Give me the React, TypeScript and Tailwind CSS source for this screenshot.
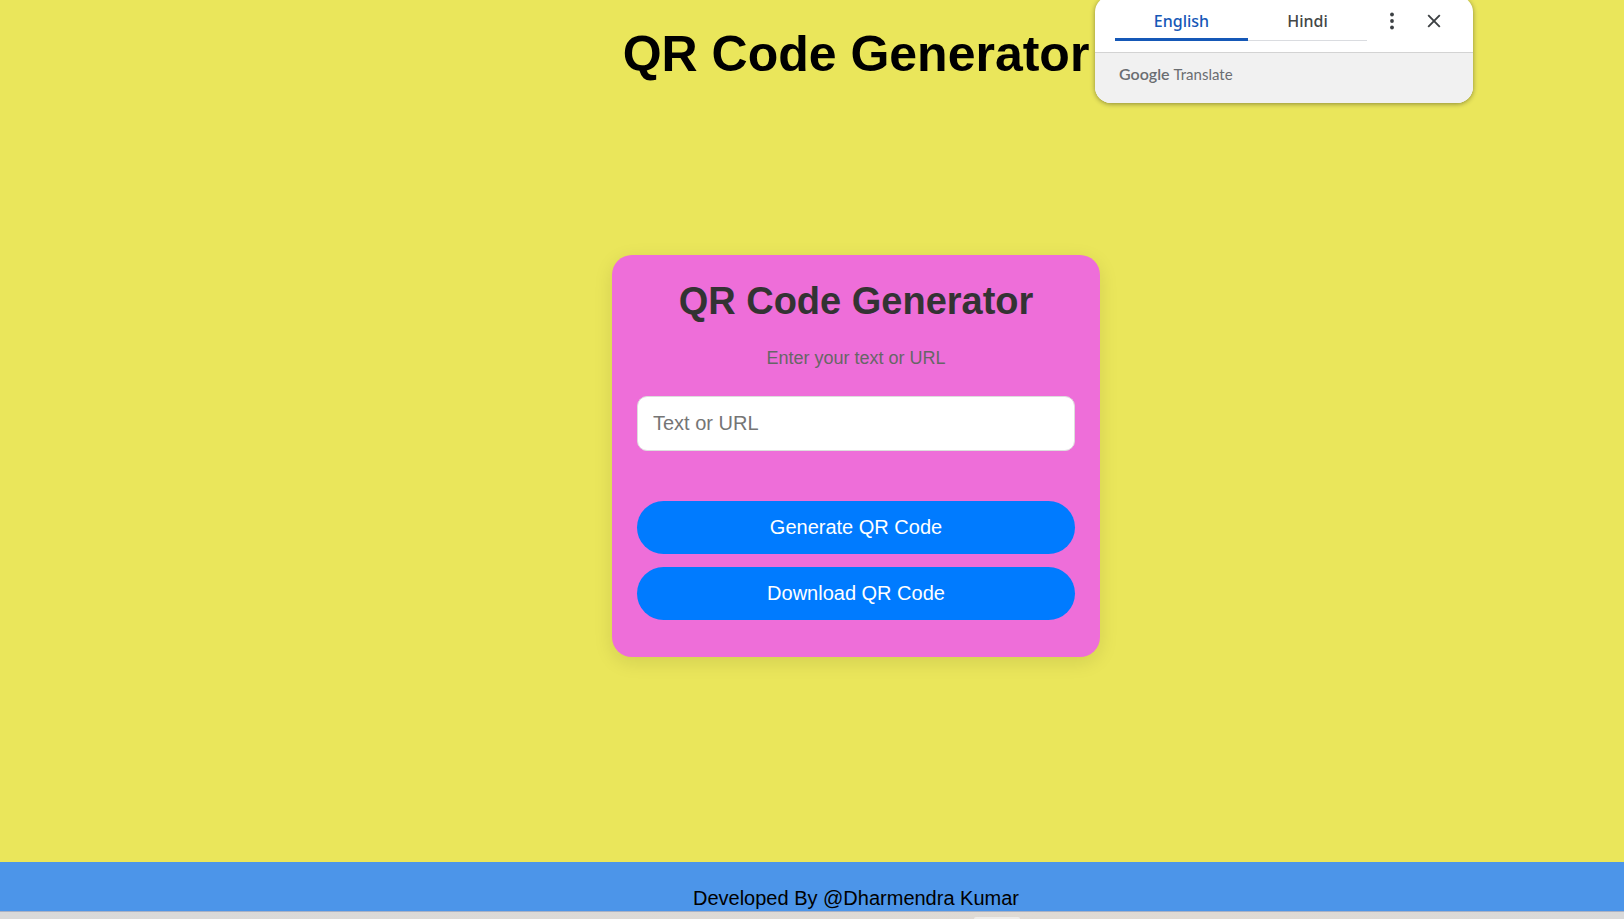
import { useState } from "react";

function TranslatePopup() {
  const [language, setLanguage] = useState("English");
  const tab = "flex-1 cursor-pointer pb-2 text-base leading-6 font-medium";
  const active = "border-b-3 border-[#1558b7] text-[#1558b7]";
  const idle = "border-b border-[#dadce0] text-[#444746]";
  return (
    <aside
      aria-label="Google Translate"
      className="absolute -top-1 right-[151px] w-[378px] overflow-hidden rounded-2xl bg-white font-['Noto_Sans',sans-serif] shadow-[0_1px_5px_rgba(0,0,0,0.4)]"
    >
      <div className="flex h-[57px] items-start border-b border-[#d3d3d3] pt-[13px] pl-5">
        <div className="flex h-8 w-[252px]">
          <button
            type="button"
            onClick={() => setLanguage("English")}
            className={`${tab} basis-[133px] grow-0! ${language === "English" ? active : idle}`}
          >
            English
          </button>
          <button
            type="button"
            onClick={() => setLanguage("Hindi")}
            className={`${tab} ${language === "Hindi" ? active : idle}`}
          >
            Hindi
          </button>
        </div>
        <button type="button" aria-label="Options" className="ml-[13px] flex h-6 w-6 items-center justify-center">
          <svg viewBox="0 0 20 20" className="h-5 w-5 fill-[#3c4043]" aria-hidden="true">
            <circle cx="10" cy="3.5" r="1.9" />
            <circle cx="10" cy="10" r="1.9" />
            <circle cx="10" cy="16.5" r="1.9" />
          </svg>
        </button>
        <button type="button" aria-label="Close" className="ml-[18px] flex h-6 w-6 items-center justify-center">
          <svg viewBox="0 0 20 20" className="h-5 w-5 stroke-[#3c4043]" aria-hidden="true">
            <path d="M4.2 4.2 15.8 15.8M15.8 4.2 4.2 15.8" strokeWidth="1.9" fill="none" />
          </svg>
        </button>
      </div>
      <div className="flex h-[50px] items-baseline gap-1 bg-[#f1f1f1] pt-[11px] pl-6 font-['Lato',sans-serif] leading-5 text-[#6a6d71]">
        <span className="text-base leading-5 font-semibold">Google</span>
        <span className="text-[15px] leading-5">Translate</span>
      </div>
    </aside>
  );
}

export default function App() {
  const [text, setText] = useState("");
  return (
    <div className="relative flex min-h-screen flex-col overflow-hidden bg-[#eae65b] font-['Liberation_Sans',Arial,sans-serif]">
      <header className="pt-[25px] pl-[88px] text-center">
        <h1 className="text-[50px] leading-[58px] font-bold text-black">QR Code Generator</h1>
      </header>
      <TranslatePopup />

      <main className="flex flex-1 items-center justify-center pb-[34px] pl-[88px]">
        <form
          onSubmit={(e) => e.preventDefault()}
          className="flex w-[488px] flex-col rounded-[20px] bg-[#ee6ed9] px-[25px] pt-6 pb-[37px] shadow-[0_5px_19px_rgba(0,0,0,0.1)]"
        >
          <h2 className="text-center text-[38px] leading-[44px] font-bold text-[#333]">QR Code Generator</h2>
          <label htmlFor="qr-text" className="mt-[25px] text-center text-lg leading-5 text-[#666]">
            Enter your text or URL
          </label>
          <input
            id="qr-text"
            type="text"
            value={text}
            onChange={(e) => setText(e.target.value)}
            placeholder="Text or URL"
            className="mt-7 h-[55px] rounded-[10px] border border-[#ddd] bg-white px-[15px] text-xl text-[#333] placeholder:text-[#757575]"
          />
          <div className="mt-[50px] flex flex-col gap-[13px]">
            <button type="submit" className="h-[53px] cursor-pointer rounded-full bg-[#007bff] text-xl text-white">
              Generate QR Code
            </button>
            <button type="button" className="h-[53px] cursor-pointer rounded-full bg-[#007bff] text-xl text-white">
              Download QR Code
            </button>
          </div>
        </form>
      </main>

      <footer className="bg-[#4c95e9] pt-[25px] pb-px pl-[88px] text-center text-xl leading-[23px] text-black">
        <p>Developed By @Dharmendra Kumar</p>
      </footer>
      <div className="flex h-2 items-end justify-center border-t border-[#a9b1c4] bg-linear-to-r from-[#d9d9d9] via-[#e0dad3] via-75% to-[#d9d9d9] pl-[370px]">
        <div className="h-[2px] w-[46px] rounded-t-sm bg-[#efedea]" />
      </div>
    </div>
  );
}
